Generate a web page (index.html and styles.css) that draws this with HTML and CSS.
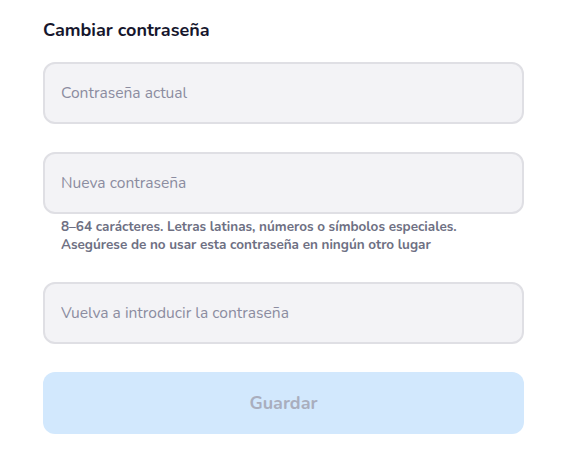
FILE: index.html
```html
<!DOCTYPE html>
<html lang="es">
<head>
<meta charset="utf-8">
<title>Cambiar contraseña</title>
<link rel="stylesheet" href="styles.css">
</head>
<body>
<form class="panel">
  <h2 class="title">Cambiar contraseña</h2>
  <div class="field">
    <input class="input" type="password" placeholder="Contraseña actual">
  </div>
  <div class="field">
    <input class="input" type="password" placeholder="Nueva contraseña">
    <p class="hint">8–64 carácteres. Letras latinas, números o símbolos especiales.<br>Asegúrese de no usar esta contraseña en ningún otro lugar</p>
  </div>
  <div class="field">
    <input class="input" type="password" placeholder="Vuelva a introducir la contraseña">
  </div>
  <button class="save" type="button" disabled>Guardar</button>
</form>
</body>
</html>
```
FILE: styles.css
```css
* { box-sizing: border-box; }
html, body { margin: 0; background: #ffffff; }
body { font-family: "Nunito", "Lato", "Noto Sans", sans-serif; }
.panel {
  width: 481px;
  margin: 0 0 0 43px;
  padding-top: 18px;
  display: flex;
  flex-direction: column;
  gap: 28px;
}
.title {
  margin: 0 0 -8px;
  font-size: 18px;
  line-height: 24px;
  font-weight: 700;
  color: #16162d;
}
.field { display: flex; flex-direction: column; }
.input {
  width: 100%;
  height: 62px;
  padding: 0 16px;
  border: 2px solid #dfdfe4;
  border-radius: 12px;
  background: #f3f3f6;
  font-family: inherit;
  font-size: 15.6px;
  color: #16162d;
  outline: none;
}
.input::placeholder { color: #8b8ca0; opacity: 1; }
.hint {
  margin: 4px 0 0;
  padding-left: 18px;
  font-size: 13.5px;
  line-height: 18px;
  font-weight: 700;
  color: #6e7083;
}
.save {
  height: 62px;
  border: none;
  border-radius: 12px;
  background: #d2e8fd;
  font-family: inherit;
  font-size: 18px;
  font-weight: 700;
  color: #a9aebe;
}
```
